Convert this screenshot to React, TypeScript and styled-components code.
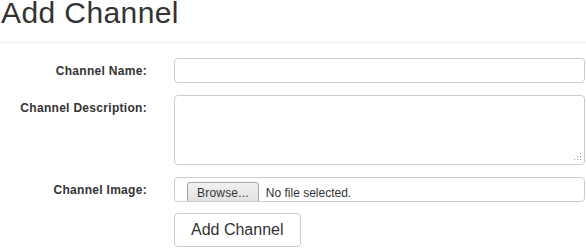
import React from 'react';
import styled, { createGlobalStyle } from 'styled-components';

const GlobalStyle = createGlobalStyle`
  html, body {
    margin: 0;
    padding: 0;
    background: #fff;
  }
  body {
    font-family: "Liberation Sans", Arial, Helvetica, sans-serif;
    color: #333;
  }
`;

const Page = styled.div`
  width: 586px;
`;

const Title = styled.h1`
  margin: 0 0 17px 0;
  padding-left: 1px;
  font-size: 30px;
  font-weight: 400;
  line-height: 25px;
  letter-spacing: 0.4px;
  color: #333;
`;

const Divider = styled.hr`
  margin: 0 0 15px 0;
  border: 0;
  border-top: 1px solid #eee;
`;

const Form = styled.form`
  display: flex;
  flex-direction: column;
  gap: 12px;
  padding-right: 1px;
`;

const Row = styled.div<{ $tight?: boolean }>`
  display: grid;
  grid-template-columns: 147px 1fr;
  column-gap: 27px;
  align-items: start;
  margin-top: ${props => (props.$tight ? '-1px' : '0')};
`;

const Label = styled.label`
  text-align: right;
  font-size: 12px;
  font-weight: 700;
  letter-spacing: 0.3px;
  line-height: 17px;
  padding-top: 5px;
  color: #333;
`;

const TextInput = styled.input`
  box-sizing: border-box;
  width: 100%;
  height: 25px;
  margin: 0;
  padding: 4px 8px;
  border: 1px solid #ccc;
  border-radius: 4px;
  font: 13px "Liberation Sans", Arial, sans-serif;
  outline: none;
`;

const AreaWrap = styled.div`
  position: relative;
  height: 70px;
`;

const TextArea = styled.textarea`
  box-sizing: border-box;
  display: block;
  width: 100%;
  height: 70px;
  margin: 0;
  padding: 4px 8px;
  border: 1px solid #ccc;
  border-radius: 4px;
  font: 13px "Liberation Sans", Arial, sans-serif;
  resize: none;
  outline: none;
`;

const Grip = styled.svg`
  position: absolute;
  right: 3px;
  bottom: 3px;
  pointer-events: none;
`;

const FileField = styled.label`
  box-sizing: border-box;
  display: flex;
  align-items: flex-start;
  height: 25px;
  padding: 4px 0 0 12px;
  border: 1px solid #ccc;
  border-radius: 4px;
  overflow: hidden;
  cursor: pointer;

  input {
    display: none;
  }
`;

const BrowseButton = styled.span`
  flex: none;
  padding: 0 9px;
  line-height: 20px;
  height: 24px;
  font-size: 12px;
  letter-spacing: 0.2px;
  color: #333;
  border: 1px solid #a6a6a6;
  border-radius: 3px;
  background: linear-gradient(#f2f2f2, #dcdcdc);
`;

const FileName = styled.span`
  margin-left: 7px;
  font-size: 12px;
  line-height: 22px;
  color: #333;
`;

const SubmitButton = styled.button`
  justify-self: start;
  height: 34px;
  padding: 6px 16px;
  border: 1px solid #ccc;
  border-radius: 4px;
  background: #fff;
  color: #333;
  font: 16px/20px "Liberation Sans", Arial, sans-serif;
  cursor: pointer;
`;

function ResizeGrip(): React.ReactElement {
  const dots: [number, number][] = [
    [8, 0],
    [5, 3], [8, 3],
    [2, 6], [5, 6], [8, 6],
  ];
  return (
    <Grip width="10" height="9" viewBox="0 0 10 9">
      {dots.map(([x, y]) => (
        <rect key={`${x}-${y}`} x={x} y={y} width="1" height="1" fill="#999" />
      ))}
    </Grip>
  );
}

export default function App(): React.ReactElement {
  return (
    <Page>
      <GlobalStyle />
      <Title>Add Channel</Title>
      <Divider />
      <Form onSubmit={e => e.preventDefault()}>
        <Row>
          <Label htmlFor="channel-name">Channel Name:</Label>
          <TextInput id="channel-name" type="text" />
        </Row>
        <Row>
          <Label htmlFor="channel-description">Channel Description:</Label>
          <AreaWrap>
            <TextArea id="channel-description" />
            <ResizeGrip />
          </AreaWrap>
        </Row>
        <Row>
          <Label htmlFor="channel-image">Channel Image:</Label>
          <FileField>
            <input id="channel-image" type="file" />
            <BrowseButton>Browse...</BrowseButton>
            <FileName>No file selected.</FileName>
          </FileField>
        </Row>
        <Row $tight>
          <span />
          <SubmitButton type="submit">Add Channel</SubmitButton>
        </Row>
      </Form>
    </Page>
  );
}
